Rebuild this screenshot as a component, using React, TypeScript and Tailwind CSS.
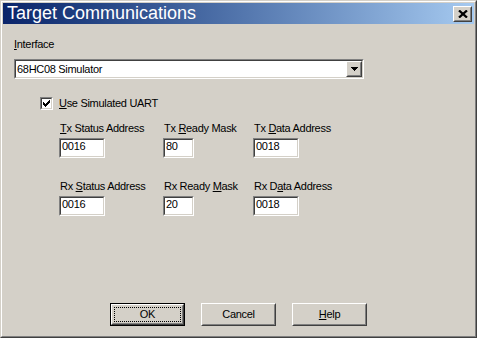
import React from "react";

const face = "bg-[#d4d0c8]";

// 2px sunken edit/combo edge
const Sunken: React.FC<{ className?: string; children?: React.ReactNode }> = ({ className = "", children }) => (
  <div className={`border border-t-[#808080] border-l-[#808080] border-b-white border-r-white ${className}`}>
    <div className="h-full w-full border border-t-[#404040] border-l-[#404040] border-b-[#d4d0c8] border-r-[#d4d0c8] bg-white">
      {children}
    </div>
  </div>
);

// 2px raised button edge
const Raised: React.FC<{ className?: string; children?: React.ReactNode }> = ({ className = "", children }) => (
  <div className={`border border-t-white border-l-white border-b-[#404040] border-r-[#404040] ${className}`}>
    <div className={`h-full w-full border border-t-[#d4d0c8] border-l-[#d4d0c8] border-b-[#808080] border-r-[#808080] ${face} flex items-center justify-center`}>
      {children}
    </div>
  </div>
);

const checkPixels = [
  "......x",
  ".....xx",
  "x...xxx",
  "xx.xxx.",
  "xxxxx..",
  ".xxx...",
  "..x....",
];

const CheckMark = () => (
  <svg width="7" height="7" viewBox="0 0 7 7" shapeRendering="crispEdges">
    {checkPixels.map((row, y) =>
      row.split("").map((c, x) => (c === "x" ? <rect key={`${x}-${y}`} x={x} y={y} width="1" height="1" fill="#000" /> : null))
    )}
  </svg>
);

const Field: React.FC<{ label: React.ReactNode; value: string; width: string }> = ({ label, value, width }) => (
  <div className="flex flex-col">
    <div className="pl-[1px] leading-[13px] whitespace-nowrap">{label}</div>
    <Sunken className={`mt-[3px] h-[20px] ${width}`}>
      <div className="pl-[1px] leading-[13px]">{value}</div>
    </Sunken>
  </div>
);

const U: React.FC<{ children: React.ReactNode }> = ({ children }) => <span className="underline underline-offset-[1px]">{children}</span>;

export default function App() {
  return (
    <div className="w-[477px] h-[338px] bg-[#d4d0c8] border border-t-[#d4d0c8] border-l-[#d4d0c8] border-b-[#404040] border-r-[#404040] font-['Liberation_Sans',Arial,sans-serif] text-[11px] tracking-[-0.3px] text-black">
      <div className="h-full border border-t-white border-l-white border-b-[#808080] border-r-[#808080] p-[1px] flex flex-col">
        {/* title bar */}
        <div className="h-[21px] flex items-center justify-between bg-gradient-to-r from-[#0a246a] to-[#a6caf0] pl-[4px] pr-[2px]">
          <span className="text-white text-[18px] leading-[21px] tracking-normal">Target Communications</span>
          <Raised className="w-[19px] h-[16px]">
            <svg width="10" height="8" viewBox="0 0 10 8">
              <path d="M1 0.5L9 7.5M9 0.5L1 7.5" stroke="#000" strokeWidth="2.3" />
            </svg>
          </Raised>
        </div>

        <div className="flex-1 flex flex-col pl-[11px]">
          <div className="mt-[14px] leading-[13px]">
            <U>I</U>nterface
          </div>
          <Sunken className="mt-[8px] w-[350px] h-[20px]">
            <div className="h-full flex items-center justify-between">
              <span className="pl-[1px] leading-[13px]">68HC08 Simulator</span>
              <Raised className="w-[16px] h-[16px]">
                <svg width="7" height="4" viewBox="0 0 7 4" shapeRendering="crispEdges">
                  <path d="M0 0H7V1H6V2H5V3H4V4H3V3H2V2H1V1H0Z" fill="#000" />
                </svg>
              </Raised>
            </div>
          </Sunken>

          <div className="mt-[18px] ml-[26px] flex items-center gap-[6px]">
            <Sunken className="w-[13px] h-[13px]">
              <div className="h-full flex items-center justify-center">
                <CheckMark />
              </div>
            </Sunken>
            <span className="leading-[13px]">
              <U>U</U>se Simulated UART
            </span>
          </div>

          <div className="mt-[12px] ml-[45px] grid grid-cols-[104px_90px_auto] gap-y-[22px]">
            <Field label={<><U>T</U>x Status Address</>} value="0016" width="w-[46px]" />
            <Field label={<>Tx <U>R</U>eady Mask</>} value="80" width="w-[31px]" />
            <Field label={<>Tx <U>D</U>ata Address</>} value="0018" width="w-[46px]" />
            <Field label={<>Rx <U>S</U>tatus Address</>} value="0016" width="w-[46px]" />
            <Field label={<>Rx Ready <U>M</U>ask</>} value="20" width="w-[31px]" />
            <Field label={<>Rx D<U>a</U>ta Address</>} value="0018" width="w-[46px]" />
          </div>

          <div className="mt-auto mb-[9px] pr-[11px] flex justify-center gap-[16px]">
            <div className="w-[75px] h-[23px] border border-black">
              <Raised className="h-full w-full">
                <div className="w-[67px] h-[15px] border border-dotted border-black flex items-center justify-center leading-[13px]">
                  OK
                </div>
              </Raised>
            </div>
            <Raised className="w-[75px] h-[23px]">
              <span className="leading-[13px]">Cancel</span>
            </Raised>
            <Raised className="w-[75px] h-[23px]">
              <span className="leading-[13px]">
                <U>H</U>elp
              </span>
            </Raised>
          </div>
        </div>
      </div>
    </div>
  );
}
